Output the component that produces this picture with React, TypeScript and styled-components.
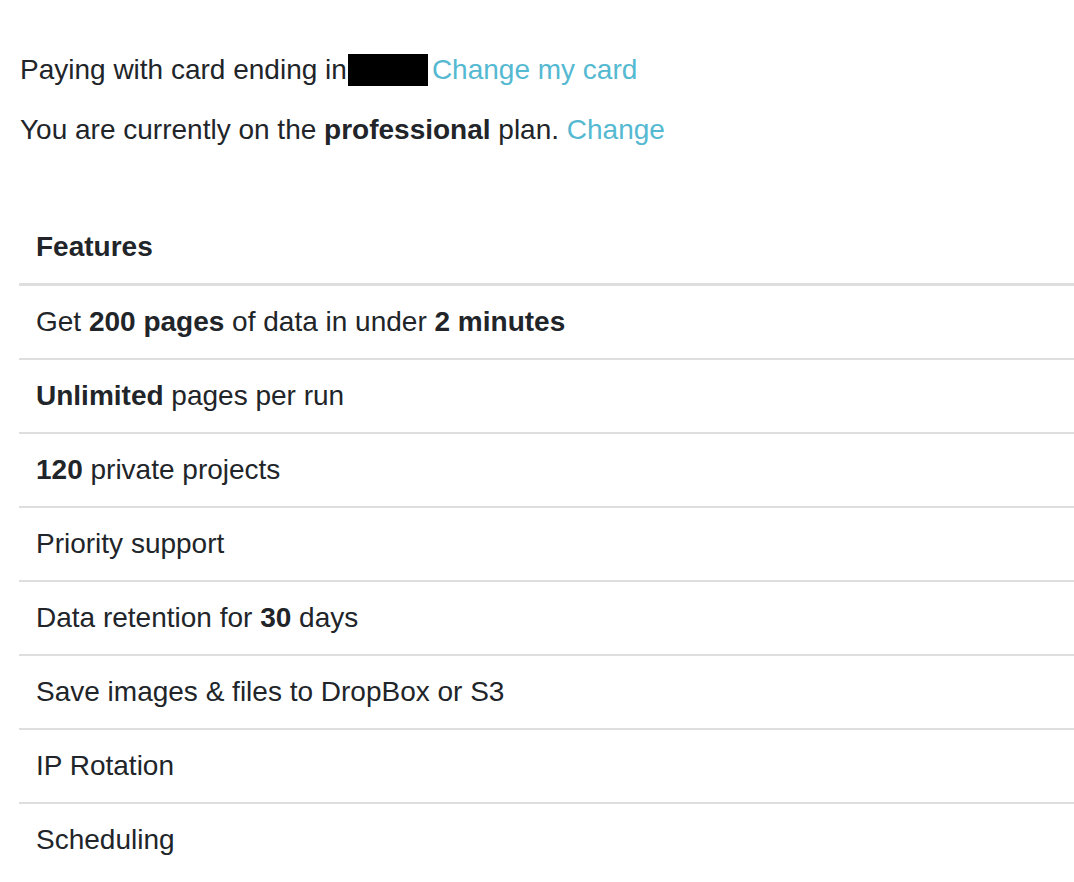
import React from 'react'
import styled, { createGlobalStyle } from 'styled-components'

const GlobalStyle = createGlobalStyle`
  html, body {
    margin: 0;
    padding: 0;
    background: #ffffff;
  }
  body {
    font-family: "Liberation Sans", Arial, Helvetica, sans-serif;
    font-size: 28px;
    line-height: 36px;
    color: #212529;
  }
`

const Page = styled.div`
  padding: 52px 0 0 19px;
`

const Line = styled.p`
  margin: 0 0 24px 1px;
  display: flex;
  align-items: center;
  white-space: pre;
`

const Redacted = styled.span`
  display: inline-block;
  width: 80px;
  height: 32px;
  background: #000000;
  margin: 0 4px 0 1px;
`

const Link = styled.a`
  color: #55b9d1;
  text-decoration: none;
  cursor: pointer;
`

const Table = styled.table`
  width: 100%;
  margin-top: 63px;
  border-collapse: collapse;
`

const HeadCell = styled.th`
  text-align: left;
  font-weight: 700;
  padding: 18px 17px;
  border-bottom: 3px solid #dedede;
`

const Cell = styled.td`
  padding: 18px 17px;
  border-top: 2px solid #dedede;
`

const features: React.ReactNode[] = [
  <>Get <b>200 pages</b> of data in under <b>2 minutes</b></>,
  <><b>Unlimited</b> pages per run</>,
  <><b>120</b> private projects</>,
  <>Priority support</>,
  <>Data retention for <b>30</b> days</>,
  <>Save images &amp; files to DropBox or S3</>,
  <>IP Rotation</>,
  <>Scheduling</>,
]

const App = () => (
  <>
    <GlobalStyle />
    <Page>
      <Line>
        Paying with card ending in<Redacted />
        <Link>Change my card</Link>
      </Line>
      <Line>
        You are currently on the <b>professional</b> plan. <Link>Change</Link>
      </Line>
      <Table>
        <thead>
          <tr>
            <HeadCell>Features</HeadCell>
          </tr>
        </thead>
        <tbody>
          {features.map((f, i) => (
            <tr key={i}>
              <Cell>{f}</Cell>
            </tr>
          ))}
        </tbody>
      </Table>
    </Page>
  </>
)

export default App
